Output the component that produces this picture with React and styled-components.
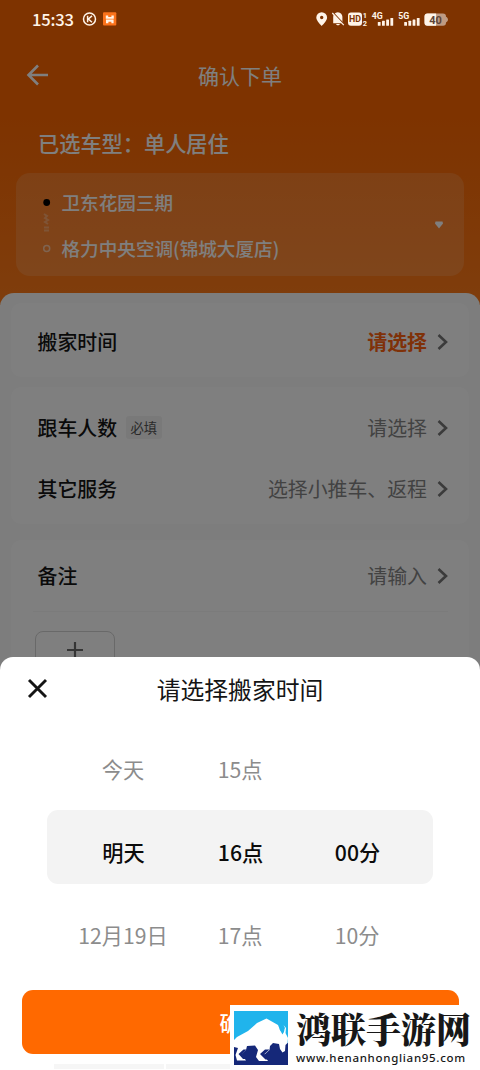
import React from "react";
import styled, { createGlobalStyle } from "styled-components";

const GlobalStyle = createGlobalStyle`
  * { box-sizing: border-box; }
  html, body { margin: 0; padding: 0; }
  body { font-family: "Noto Sans CJK SC", sans-serif; background: #fff; }
`;

const Phone = styled.div`
  position: relative;
  width: 480px;
  height: 1070px;
  overflow: hidden;
  background: #fafafa;
`;

const Header = styled.header`
  display: flex;
  flex-direction: column;
  height: 305px;
  padding: 0 16px;
  background: linear-gradient(#fc6600 0, #fc6600 110px, #ff7a18 293px);
  color: #fff;
`;

const NavBar = styled.div`
  display: grid;
  grid-template-columns: 44px 1fr 44px;
  align-items: center;
  height: 50px;
  margin-top: 50px;
  svg { margin-left: 10px; }
`;

const NavTitle = styled.h1`
  margin: 0;
  padding-bottom: 1px;
  font-size: 21px;
  font-weight: 400;
  line-height: 30px;
  text-align: center;
`;

const VehicleType = styled.div`
  margin: 28px 0 0 22px;
  font-size: 21.2px;
  font-weight: 500;
  line-height: 30px;
`;

const AddressCard = styled.div`
  display: flex;
  align-items: center;
  height: 103px;
  margin-top: 15px;
  padding: 0 20px 0 25px;
  border-radius: 14px;
  background: rgba(255, 255, 255, 0.14);
`;

const RouteMarks = styled.svg`
  width: 12px;
  height: 60px;
  flex: none;
`;

const Addresses = styled.div`
  display: flex;
  flex: 1;
  flex-direction: column;
  gap: 18px;
  margin-left: 8.5px;
  font-size: 18.6px;
  font-weight: 500;
  line-height: 28px;
`;

const Body = styled.main`
  display: flex;
  flex-direction: column;
  gap: 10px;
  margin-top: -12px;
  padding: 10px 11px 0;
  border-radius: 14px 14px 0 0;
  background: #fafafa;
  position: relative;
`;

const Card = styled.section`
  display: flex;
  flex-direction: column;
  height: ${(p) => p.$height}px;
  margin-bottom: ${(p) => p.$after || 0}px;
  padding: ${(p) => p.$top}px 21px 0 26.5px;
  border-radius: 10px;
  background: #fff;
`;

const Row = styled.div`
  display: flex;
  align-items: center;
  height: 30px;
  margin-bottom: ${(p) => p.$after || 0}px;
  font-size: 19.9px;
  line-height: 30px;
  svg { flex: none; margin: 0 0 0 10px; }
`;

const RowLabel = styled.span`
  color: #151515;
  font-weight: 500;
`;

const Required = styled.span`
  margin-left: 9px;
  padding: 0 4.5px;
  border-radius: 3px;
  background: #f3f3f3;
  color: #555;
  font-size: 13.3px;
  line-height: 23px;
`;

const RowValue = styled.span`
  margin-left: auto;
  color: ${(p) => (p.$accent ? "#ff6210" : "#858585")};
  font-weight: ${(p) => (p.$accent ? 700 : 400)};
`;

const Divider = styled.div`
  height: 1px;
  margin: 0 0 19px -5px;
  background: #f7f7f7;
`;

const AddPhoto = styled.div`
  display: flex;
  justify-content: center;
  width: 80px;
  height: 80px;
  margin-left: -2.5px;
  padding-top: 9px;
  border: 1px solid #d2d2d2;
  border-radius: 8px;
`;

const Mask = styled.div`
  position: absolute;
  inset: 0;
  background: rgba(0, 0, 0, 0.5);
`;

const StatusBar = styled.div`
  position: absolute;
  top: 0;
  left: 0;
  right: 0;
  display: flex;
  align-items: center;
  height: 38px;
  padding: 0 30px 0 32px;
  color: #fff4e8;
`;

const Clock = styled.span`
  width: 50px;
  font-family: "Noto Sans CJK SC", sans-serif;
  font-size: 16.6px;
  line-height: 20px;
  letter-spacing: -0.2px;
  font-weight: 500;
`;

const Sheet = styled.section`
  position: absolute;
  left: 0;
  right: 0;
  bottom: 0;
  height: 413px;
  padding-top: 16px;
  border-radius: 13px 13px 0 0;
  background: #fff;
`;

const SheetHead = styled.div`
  display: grid;
  grid-template-columns: 60px 1fr 60px;
  align-items: center;
  height: 34px;
  svg { margin-left: 27px; margin-top: -3px; }
`;

const SheetTitle = styled.h2`
  margin: 0;
  padding-bottom: 2px;
  color: #151515;
  font-size: 23.8px;
  font-weight: 400;
  line-height: 32px;
  text-align: center;
`;

const Picker = styled.div`
  display: flex;
  flex-direction: column;
  gap: 9px;
  margin: 20px 47px 0;
`;

const PickerRow = styled.div`
  display: grid;
  grid-template-columns: repeat(3, 117px);
  align-items: center;
  height: 74px;
  padding: ${(p) => (p.$selected ? "9px 0 0 18px" : "9px 0 0 17.5px")};
  border-radius: 11px;
  background: ${(p) => (p.$selected ? "#f3f3f3" : "transparent")};
  color: ${(p) => (p.$selected ? "#0b0b0b" : "#8c8c8c")};
  font-size: 21.2px;
  font-weight: ${(p) => (p.$selected ? 500 : 400)};
  line-height: 30px;
  text-align: center;
`;

const Confirm = styled.div`
  display: flex;
  align-items: center;
  justify-content: center;
  height: 64px;
  margin: 23px 21px 0 22px;
  border-radius: 11px;
  background: #ff6900;
  color: #fff;
  font-size: 21px;
  font-weight: 500;
`;

const FooterStrip = styled.div`
  display: flex;
  gap: 2px;
  margin: 10px 0 0 54px;
  span { width: 110px; height: 5px; background: #f6f6f6; }
`;

const Watermark = styled.div`
  position: absolute;
  right: 0;
  bottom: 0;
  display: flex;
  width: 250px;
  height: 65px;
  padding: 6px 0 0 4px;
  background: #fff;
  svg { flex: none; }
`;

const Brand = styled.div`
  display: flex;
  flex-direction: column;
  margin-left: 8px;
  color: #171717;
`;

const BrandName = styled.div`
  height: 36px;
  font-family: "Noto Serif CJK SC", "Noto Sans CJK SC", serif;
  font-size: 35px;
  font-weight: 900;
  line-height: 34px;
  white-space: nowrap;
`;

const BrandUrl = styled.div`
  margin-top: 3px;
  font-family: "Noto Sans", sans-serif;
  font-size: 11.5px;
  font-weight: 500;
  line-height: 16px;
  letter-spacing: 0.7px;
`;

const Chevron = () => (
  <svg width="11" height="18" viewBox="0 0 11 18" fill="none" stroke="#777" strokeWidth="2.6">
    <path d="M1.5 2l7.5 7-7.500 7" />
  </svg>
);

const StatusLeftIcons = () => (
  <svg width="36" height="16" viewBox="82 11 36 16">
    <circle cx="89.5" cy="19" r="6" fill="none" stroke="#fff4e8" strokeWidth="1.5" />
    <path d="M87.6 15.8v6.4M92 15.9l-3.6 3.1 3.6 3.2" fill="none" stroke="#fff4e8" strokeWidth="1.5" />
    <rect x="103" y="12.3" width="13.3" height="13.3" rx="1" fill="#fb731b" />
    <path d="M105.800 15.500h2.400v1.500h3.200v-1.500h2.400v3.200h-8zM106 19.500h7.600v3.700h-2.200v-1.400h-3v1.400H106z" fill="#fff4e8" />
  </svg>
);

const bars = (x) =>
  [3.8, 5, 6.3, 7.8].map((h, i) => (
    <rect key={i} x={x + i * 4.2} y={25.7 - h} width="2.8" height={h} rx="0.5" fill="#fff4e8" />
  ));

const RightIcons = styled.svg`
  margin-left: auto;
  font-family: Roboto, sans-serif;
  font-weight: 700;
`;

const StatusRightIcons = () => (
  <RightIcons width="136" height="20" viewBox="314 9 136 20">
    <path fillRule="evenodd" d="M321.7 12.2a5.4 5.4 0 0 0-5.4 5.4c0 3.6 5.4 8.4 5.4 8.4s5.4-4.8 5.4-8.4a5.4 5.4 0 0 0-5.4-5.4zm0 3.6a1.7 1.7 0 1 1 0 3.4 1.7 1.7 0 0 1 0-3.4z" fill="#fff4e8" />
    <path d="M333.2 23.300v-6.500c0-2.400 1.700-4.300 4.600-4.600 2.900.3 4.600 2.200 4.600 4.600v5l1 1.500zM336 24h4c-.7 1.800-3.300 1.800-4 0z" fill="#fff4e8" />
    <path d="M333.300 13l11.300 12" stroke="#7e3300" strokeWidth="1.5" />
    <path d="M332.3 13l11.500 12.1" stroke="#fff4e8" strokeWidth="1.2" />
    <rect x="348" y="12.5" width="14" height="13.3" rx="3" fill="#fff4e8" />
    <text x="349" y="22.3" fontSize="8.8" fill="#7e3300">HD</text>
    <text x="362.700" y="18" fontSize="7.4" fill="#fff4e8">1</text>
    <text x="362.700" y="25.5" fontSize="7.4" fill="#fff4e8">2</text>
    <text x="371.800" y="18.5" fontSize="8.800" fill="#fff4e8">4G</text>
    {bars(377.8)}
    <text x="398.300" y="18.5" fontSize="8.800" fill="#fff4e8">5G</text>
    {bars(404.2)}
    <rect x="424.5" y="13.4" width="21.5" height="12.4" rx="3" fill="#bf9b83" />
    <path d="M427.5 13.4h8.6v12.4h-8.6a3 3 0 0 1-3-3v-6.4a3 3 0 0 1 3-3z" fill="#fff4e8" />
    <path d="M446 16.800c2.600 1 2.600 4.600 0 5.600z" fill="#bf9b83" />
    <text x="435.6" y="23.5" fontSize="11" textAnchor="middle" fill="#5e4438">40</text>
  </RightIcons>
);

const BisonLogo = () => (
  <svg width="54" height="54" viewBox="0 0 54 54">
    <rect width="54" height="32" fill="#20b4ec" />
    <rect y="32" width="54" height="22" fill="#152879" />
    <path
      d="M0 29L3 26 14 20 23 12 32.500 7.500 44 14 46 19 49 22 51 17 49.500 14 52 17 51.500 22 54 27 53.500 32 51.500 34 51 40 48.500 41.500 46 38 45 33 39 32 36 35 35.500 39 30 44 34 50 25 50 22 46 24 39 21 34.500 13 35 12 39 7.500 43 12 49.500 3 49.500 1.500 44 4 37 0 36z"
      fill="#fff"
    />
    <path d="M46.500 20c-2.500-4 2-5 2-9.500 1.500 3-.5 5.500 1.500 7.500 1 2-.5 3.500-1.500 5.500z" fill="#20b4ec" />
    <path d="M4.500 43l5-4.500h3l-4.500 4.500 4 5H9zM26 43l5-4.500h4.500L30.500 43l4 5.500h-3z" fill="#152879" />
  </svg>
);

const times = [
  ["今天", "15点", ""],
  ["明天", "16点", "00分"],
  ["12月19日", "17点", "10分"],
];

export default function App() {
  return (
    <>
      <GlobalStyle />
      <Phone>
        <Header>
          <NavBar>
            <svg width="24" height="24" viewBox="0 0 24 24" fill="none" stroke="#fff" strokeWidth="2.6">
              <path d="M12 2.500L2.500 12 12 21.500M2.500 12H22" />
            </svg>
            <NavTitle>确认下单</NavTitle>
          </NavBar>
          <VehicleType>已选车型：单人居住</VehicleType>
          <AddressCard>
            <RouteMarks viewBox="0 0 12 60">
              <circle cx="5.700" cy="7.500" r="3.400" fill="#000" />
              <path d="M3 19l3 2-2 2 3 2-3 2 3 2M3 32.500h5M3 35.500h5" fill="none" stroke="#ffd5b8" strokeOpacity=".45" strokeWidth="2" />
              <circle cx="5.700" cy="53.500" r="3" fill="none" stroke="#ffc9a3" strokeWidth="1.500" />
            </RouteMarks>
            <Addresses>
              <span>卫东花园三期</span>
              <span>格力中央空调(锦城大厦店)</span>
            </Addresses>
            <svg width="10" height="8" viewBox="0 0 10 8">
              <path d="M1.500 0.500h7L9 2.500 5 7.500 1 2.500z" fill="#fff" />
            </svg>
          </AddressCard>
        </Header>

        <Body>
          <Card $height={74} $top={23.5}>
            <Row>
              <RowLabel>搬家时间</RowLabel>
              <RowValue $accent>请选择</RowValue>
              <Chevron />
            </Row>
          </Card>
          <Card $height={137} $top={25.5} $after={6}>
            <Row $after={31.5}>
              <RowLabel>跟车人数</RowLabel>
              <Required>必填</Required>
              <RowValue>请选择</RowValue>
              <Chevron />
            </Row>
            <Row>
              <RowLabel>其它服务</RowLabel>
              <RowValue>选择小推车、返程</RowValue>
              <Chevron />
            </Row>
          </Card>
          <Card $height={180} $top={20.5}>
            <Row $after={20.5}>
              <RowLabel>备注</RowLabel>
              <RowValue>请输入</RowValue>
              <Chevron />
            </Row>
            <Divider />
            <AddPhoto>
              <svg width="18" height="18" viewBox="0 0 18 18" stroke="#6a6a6a" strokeWidth="2.200">
                <path d="M9 1v16M1 9h16" />
              </svg>
            </AddPhoto>
          </Card>
        </Body>

        <Mask />

        <StatusBar>
          <Clock>15:33</Clock>
          <StatusLeftIcons />
          <StatusRightIcons />
        </StatusBar>

        <Sheet>
          <SheetHead>
            <svg width="21" height="21" viewBox="0 0 21 21" stroke="#151515" strokeWidth="2.900">
              <path d="M2 2l17 17M19 2L2 19" />
            </svg>
            <SheetTitle>请选择搬家时间</SheetTitle>
          </SheetHead>
          <Picker>
            {times.map((row, i) => (
              <PickerRow key={i} $selected={i === 1}>
                {row.map((cell, j) => (
                  <span key={j}>{cell}</span>
                ))}
              </PickerRow>
            ))}
          </Picker>
          <Confirm>确认</Confirm>
          <FooterStrip>
            <span />
            <span />
          </FooterStrip>
        </Sheet>

        <Watermark>
          <BisonLogo />
          <Brand>
            <BrandName>鸿联手游网</BrandName>
            <BrandUrl>www.henanhonglian95.com</BrandUrl>
          </Brand>
        </Watermark>
      </Phone>
    </>
  );
}
